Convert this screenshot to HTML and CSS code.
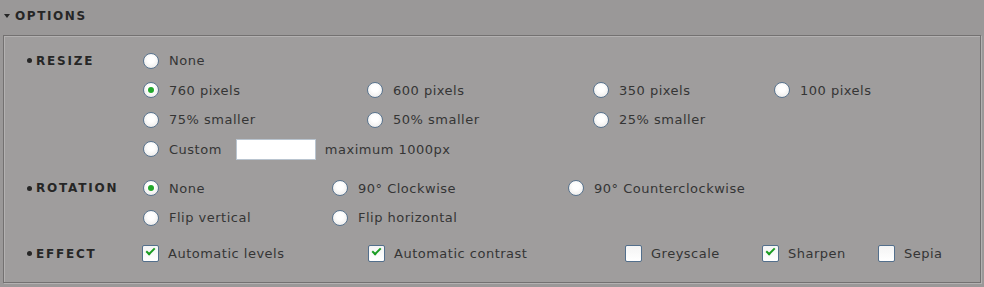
FILE: index.html
```html
<!DOCTYPE html><html>
<head>
<title>Options</title>
<link rel="stylesheet" href="styles.css">
</head>
<body>
<div class='head'><span class='arrow'></span>OPTIONS</div>
<div class='box'>

<div class='group'>
 <div class='label'><span class='dot'></span>RESIZE</div>
 <div class='opts resize'>
  <div class='opt'><span class='radio'></span>None</div>
  <div class='row'>
   <div class='opt'><span class='radio on'></span>760 pixels</div>
   <div class='opt'><span class='radio'></span>600 pixels</div>
   <div class='opt'><span class='radio'></span>350 pixels</div>
   <div class='opt'><span class='radio'></span>100 pixels</div>
  </div>
  <div class='row'>
   <div class='opt'><span class='radio'></span>75% smaller</div>
   <div class='opt'><span class='radio'></span>50% smaller</div>
   <div class='opt'><span class='radio'></span>25% smaller</div>
  </div>
  <div class='opt'><span class='radio'></span>Custom <span class='field'></span> maximum 1000px</div>
 </div>
</div>

<div class='group rot'>
 <div class='label'><span class='dot'></span>ROTATION</div>
 <div class='opts rotation'>
  <div class='row'>
   <div class='opt'><span class='radio on'></span>None</div>
   <div class='opt'><span class='radio'></span>90&deg; Clockwise</div>
   <div class='opt'><span class='radio'></span>90&deg; Counterclockwise</div>
  </div>
  <div class='row'>
   <div class='opt'><span class='radio'></span>Flip vertical</div>
   <div class='opt'><span class='radio'></span>Flip horizontal</div>
  </div>
 </div>
</div>

<div class='group eff'>
 <div class='label'><span class='dot'></span>EFFECT</div>
 <div class='opts effect'>
  <div class='row'>
   <div class='opt'><span class='check on'></span>Automatic levels</div>
   <div class='opt'><span class='check on'></span>Automatic contrast</div>
   <div class='opt'><span class='check'></span>Greyscale</div>
   <div class='opt'><span class='check on'></span>Sharpen</div>
   <div class='opt'><span class='check'></span>Sepia</div>
  </div>
 </div>
</div>

</div>
</body>
</html>
```

FILE: styles.css
```css
body { margin: 0; background: #9a9898; font-family: "DejaVu Sans", Verdana, sans-serif; font-size: 13px; letter-spacing: 0.5px; color: #353535; width: 984px; height: 287px; overflow: hidden; }

.head { height: 35px; display: flex; align-items: center; padding-left: 4px; font-size: 12px; font-weight: bold; letter-spacing: 1.6px; color: #262626; box-sizing: border-box; padding-bottom: 4px; }
.arrow { width: 0; height: 0; border-left: 3px solid transparent; border-right: 3px solid transparent; border-top: 4px solid #262626; margin-right: 5px; margin-top: 1px; }

.box { margin: 0 3px 0 3px; height: 248px; box-sizing: border-box; background: #9f9d9d; border: 1px solid #737171; box-shadow: inset 1px 1px 0 #b3b1b1, 1px 1px 0 #b3b1b1; padding-top: 10px; }

.group { display: flex; }
.group.rot { margin-top: 9.5px; }
.group.eff { margin-top: 6.5px; }

.label { width: 138px; height: 29.5px; display: flex; align-items: center; padding-left: 23px; box-sizing: border-box; font-size: 12px; font-weight: bold; letter-spacing: 1.8px; color: #262626; }
.dot { width: 5px; height: 5px; border-radius: 50%; background: #262626; margin-right: 4px; }

.row { display: flex; }
.opt { height: 29.5px; display: flex; align-items: center; white-space: nowrap; }

.resize .row .opt:nth-child(1) { width: 224px; }
.resize .row .opt:nth-child(2) { width: 226px; }
.resize .row .opt:nth-child(3) { width: 181px; }
.rotation .opt:nth-child(1) { width: 189px; }
.rotation .opt:nth-child(2) { width: 236px; }
.effect .opt:nth-child(1) { width: 226px; }
.effect .opt:nth-child(2) { width: 257px; }
.effect .opt:nth-child(3) { width: 137px; }
.effect .opt:nth-child(4) { width: 116px; }

.radio { width: 14px; height: 14px; border-radius: 50%; border: 1px solid #5a7590; background: radial-gradient(circle at 50% 40%, #ffffff 30%, #e6e4e2 100%); margin-left: 1px; margin-right: 10px; position: relative; }
.radio.on::after { content: ''; position: absolute; left: 4px; top: 4px; width: 6px; height: 6px; border-radius: 50%; background: #22a82c; }

.check { width: 15px; height: 15px; border: 1px solid #536f8c; border-radius: 2px; background: linear-gradient(#f4f4f4, #ffffff); margin-left: 0; margin-right: 9px; position: relative; }
.check.on::after { content: ''; position: absolute; left: 3px; top: 2px; width: 7px; height: 3px; border-left: 2px solid #1a9c22; border-bottom: 2px solid #1a9c22; transform: rotate(-45deg); }

.field { display: inline-block; width: 78px; height: 19px; background: #ffffff; border: 1px solid #b9c4cf; margin: 0 9px 0 14px; }
```
